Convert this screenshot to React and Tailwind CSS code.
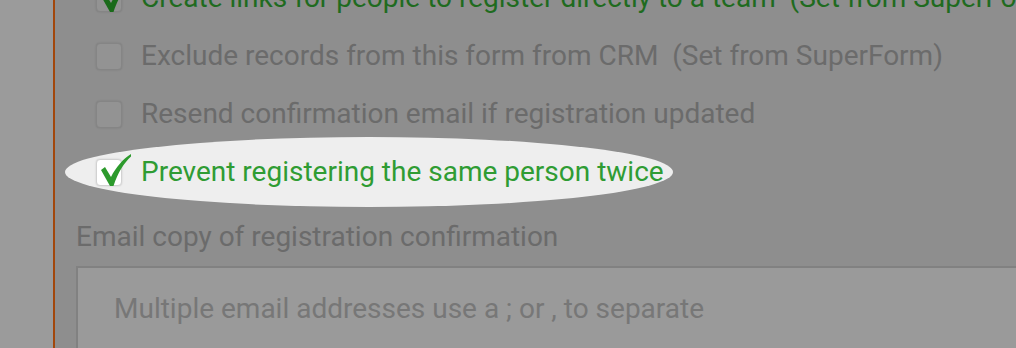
import React from 'react';

function Check({ color }) {
  return (
    <svg className="absolute left-[3px] top-[-7px]" width="32" height="34" viewBox="0 0 32 34">
      <path d="M1 17 L5 14 L11 24 C16 14 23 6 31 1 L31 3.5 C24 10 18 19 13.5 33 L10 33 Z" fill={color} />
    </svg>
  );
}

function Row({ checked, highlight, children }) {
  let box = 'bg-[#939393] border-[#858585]';
  if (highlight) box = 'bg-white border-[#d2d2d2]';
  let text = 'text-[#6b6b6b]';
  if (checked) text = highlight ? 'text-[#2f9c33]' : 'text-[#1f6b1f]';
  return (
    <div className="relative h-[58px] flex items-center pl-[20px]">
      {highlight && (
        <div className="absolute left-[-11px] top-[-6px] w-[608px] h-[70px] rounded-[50%] bg-[#eeeeee]" />
      )}
      <div className={`relative shrink-0 w-[26px] h-[27px] rounded-[4px] border shadow-[0_0_2px_rgba(0,0,0,0.15)] ${box}`}>
        {checked && <Check color={highlight ? '#2c9a2c' : '#1a6a1a'} />}
      </div>
      <span className={`relative ml-[19px] text-[28px] leading-[34px] whitespace-nowrap ${text}`}>{children}</span>
    </div>
  );
}

export default function App() {
  return (
    <div className="w-[1016px] h-[348px] overflow-hidden flex bg-[#8e8e8e]" style={{ fontFamily: 'Roboto, sans-serif' }}>
      <div className="w-[53px] shrink-0 bg-[#9b9b9b]" />
      <div className="w-[2px] shrink-0 bg-[#a2470c]" />
      <div className="flex-1 pl-[21px] min-w-0 overflow-hidden">
        <div className="-mt-[31px]">
          <Row checked>Create links for people to register directly to a team&nbsp; (Set from SuperForm)</Row>
          <Row>Exclude records from this form from CRM&nbsp; (Set from SuperForm)</Row>
          <Row>Resend confirmation email if registration updated</Row>
          <Row checked highlight>Prevent registering the same person twice</Row>
        </div>
        <div className="mt-[19px] text-[28px] leading-[34px] text-[#6b6b6b] whitespace-nowrap">
          Email copy of registration confirmation
        </div>
        <div className="mt-[12px] h-[120px] border-2 border-[#818181] border-r-0 bg-[#9a9a9a] pl-[36px] pt-[24px]">
          <span className="text-[28px] leading-[34px] text-[#777777] whitespace-nowrap">
            Multiple email addresses use a ; or , to separate
          </span>
        </div>
      </div>
    </div>
  );
}
